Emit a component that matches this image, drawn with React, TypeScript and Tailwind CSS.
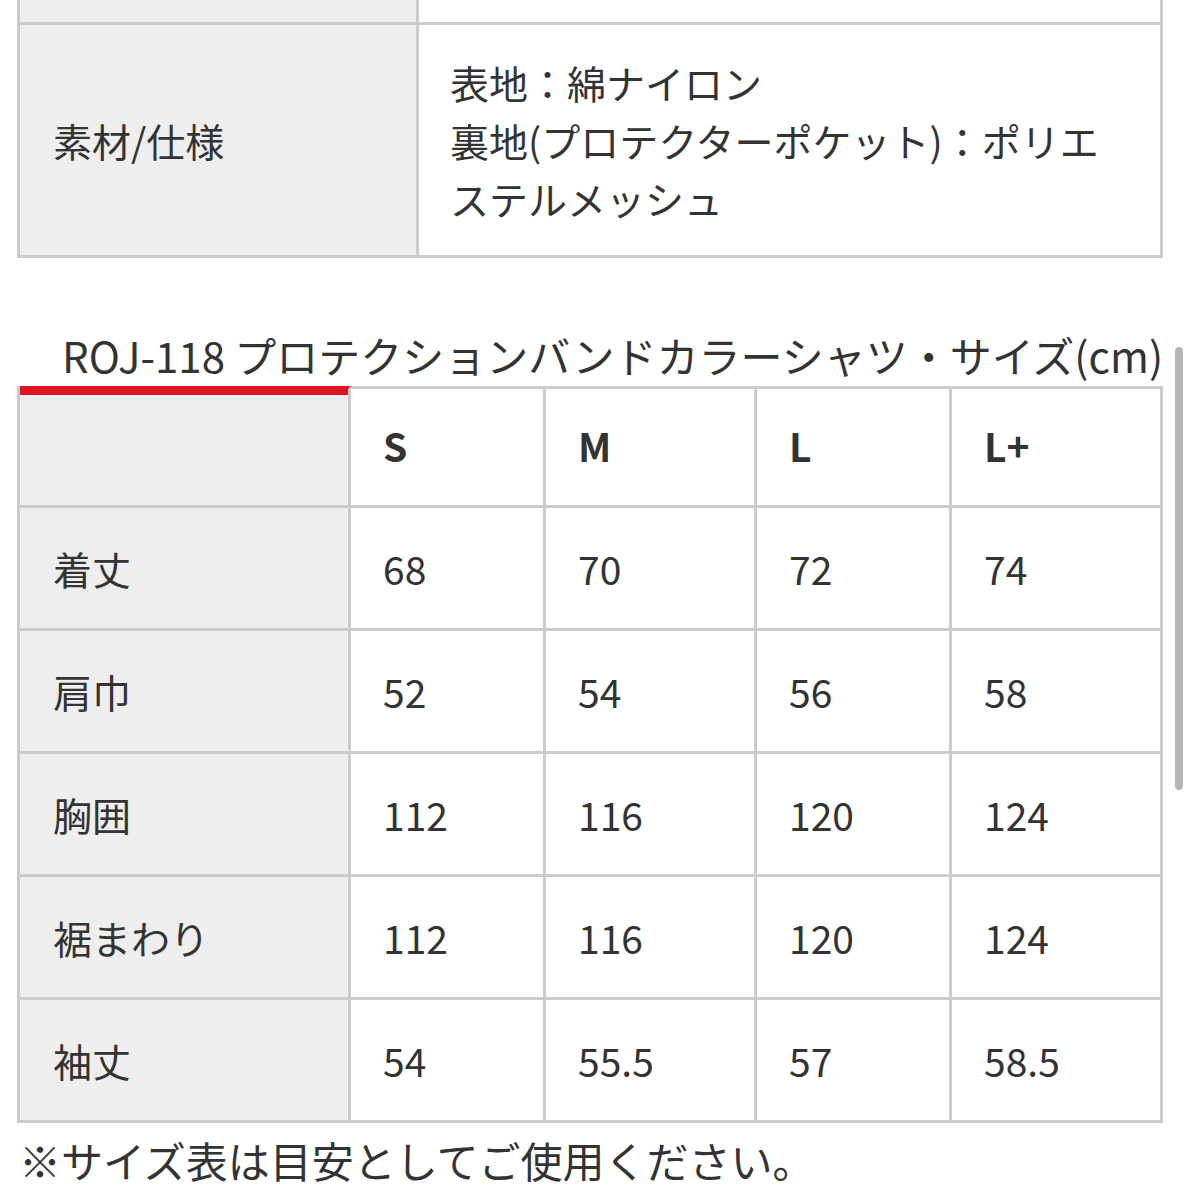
import React from 'react';

const sizes = ['S', 'M', 'L', 'L+'];

const rows: { label: string; values: string[] }[] = [
  { label: '着丈', values: ['68', '70', '72', '74'] },
  { label: '肩巾', values: ['52', '54', '56', '58'] },
  { label: '胸囲', values: ['112', '116', '120', '124'] },
  { label: '裾まわり', values: ['112', '116', '120', '124'] },
  { label: '袖丈', values: ['54', '55.5', '57', '58.5'] },
];

// column widths measured from the screenshot (each includes its 3px right border)
const cols = 'grid-cols-[331px_195px_211px_195px_211px]';

export default function App() {
  return (
    <div
      className="relative w-[1193px] h-[1193px] overflow-hidden bg-white text-[#333333] text-[39px] leading-[58px]"
      style={{ fontFamily: '"Noto Sans CJK JP", "Noto Sans", sans-serif' }}
    >
      {/* Spec table (partially scrolled out) */}
      <div className="ml-[17px] w-[1146px] border-l-[3px] border-[#cccccc] grid grid-cols-[399px_744px]">
        <div className="h-[25px] bg-[#eeeeee] border-r-[3px] border-b-[3px] border-[#cccccc]" />
        <div className="h-[25px] bg-white border-r-[3px] border-b-[3px] border-[#cccccc]" />

        <div className="h-[233px] bg-[#eeeeee] border-r-[3px] border-b-[3px] border-[#cccccc] flex items-center pl-[33px]">
          素材/仕様
        </div>
        <div className="h-[233px] bg-white border-r-[3px] border-b-[3px] border-[#cccccc] flex items-center pl-[31px] pr-[50px]">
          <p>
            表地：綿ナイロン
            <br />
            裏地(プロテクターポケット)：ポリエステルメッシュ
          </p>
        </div>
      </div>

      {/* Size table */}
      <div className="mt-[68px] ml-[17px] w-[1146px]">
        <h2 className="pl-[45px] whitespace-nowrap font-normal text-[42px]">
          ROJ-118 プロテクションバンドカラーシャツ・サイズ(cm)
        </h2>

        <div className={`mt-[2px] grid ${cols} border-l-[3px] border-[#cccccc]`}>
          <div className="h-[122px] bg-[#eeeeee] border-t-[3px] border-t-[#dd1521] border-r-[3px] border-b-[3px] border-[#cccccc]">
            <div className="h-[6px] bg-[#dd1521]" />
          </div>
          {sizes.map((s) => (
            <div
              key={s}
              className="h-[122px] flex items-center pl-[32px] pb-[4px] font-bold border-t-[3px] border-r-[3px] border-b-[3px] border-[#cccccc]"
            >
              {s}
            </div>
          ))}

          {rows.map((r) => (
            <React.Fragment key={r.label}>
              <div className="h-[123px] flex items-center pl-[33px] bg-[#eeeeee] border-r-[3px] border-b-[3px] border-[#cccccc]">
                {r.label}
              </div>
              {r.values.map((v, i) => (
                <div
                  key={i}
                  className="h-[123px] flex items-center pl-[32px] border-r-[3px] border-b-[3px] border-[#cccccc]"
                >
                  {v}
                </div>
              ))}
            </React.Fragment>
          ))}
        </div>

        <p className="mt-[8px] pl-[2px] text-[42px]">※サイズ表は目安としてご使用ください。</p>
      </div>

      {/* overlay scrollbar */}
      <div className="absolute left-[1175px] top-[347px] w-[8px] h-[443px] rounded-full bg-[#b5b5b5]" />
    </div>
  );
}
